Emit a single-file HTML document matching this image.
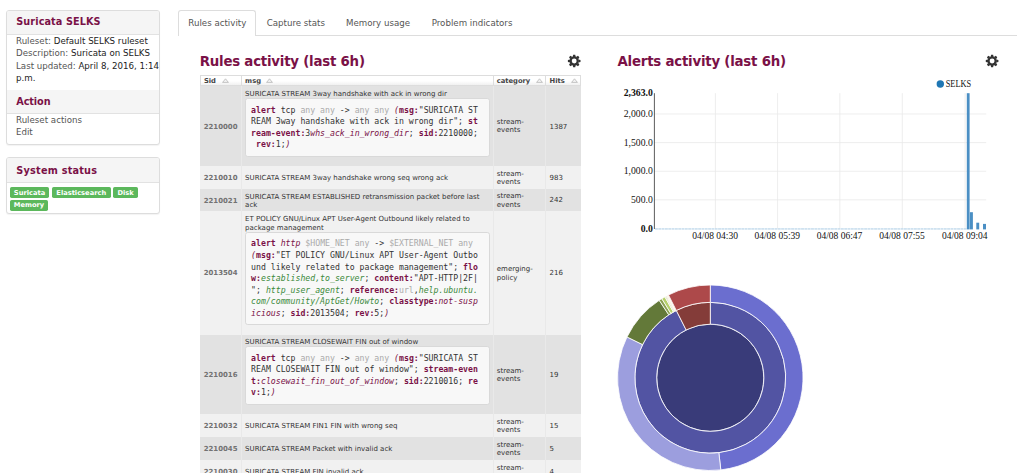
<!DOCTYPE html>
<html lang="en">
<head>
<meta charset="utf-8">
<title>Suricata SELKS</title>
<style>
*{box-sizing:border-box}
html,body{margin:0;padding:0;background:#fff}
body{width:1024px;height:473px;overflow:hidden;position:relative;font-family:"DejaVu Sans","Liberation Sans",sans-serif;font-size:8.67px;color:#333}
.panel{position:absolute;left:6px;width:154px;background:#fff;border:1px solid #ddd;border-radius:3px;box-shadow:0 1px 1px rgba(0,0,0,.05);overflow:hidden}
.ph{position:absolute;left:0;right:0;background:#f5f5f5;height:23px;padding:0 9.3px;line-height:22.4px;font-weight:bold;font-size:9.7px;color:#7a1147;border-bottom:1px solid #e2e2e2;white-space:nowrap}
.pb{position:absolute;left:9px;font-size:8.67px;line-height:12.4px;color:#555;white-space:nowrap}
.pb b{font-weight:normal;color:#222}
#p1{top:10px;height:135px}
#p2{top:157px;height:57px}
.lab{position:absolute;background:#5cb85c;color:#fff;font-weight:bold;font-size:6.7px;line-height:10px;height:11px;padding:0;text-align:center;border-radius:1.7px;white-space:nowrap}
.labs{position:absolute;left:3.2px;font-size:8.67px;white-space:pre;line-height:10px;height:11px}
.tabs{position:absolute;left:178px;top:35px;width:839px;height:1px;background:#ddd}
.tab{position:absolute;top:10px;height:26px;line-height:26.6px;font-size:8.67px;color:#555;white-space:nowrap}
.tab.act{left:178px;width:78px;border:1px solid #ddd;border-bottom:0;border-radius:3px 3px 0 0;background:#fff;height:26px;padding-left:9.3px;line-height:25.6px}
h2{position:absolute;margin:0;letter-spacing:-.22px;font-size:13.35px;line-height:18px;font-weight:bold;color:#7a1147;white-space:nowrap}
#tb{position:absolute;left:0;top:0;width:1024px;height:473px;font-size:7px;line-height:8.15px}
#tb .r{position:absolute;left:200px;width:380.6px}
#tb .o{background:#e2e2e2}
#tb .e{background:#f1f1f1}
#tb .vd{position:absolute;top:86px;height:390px;width:1px;background:#e9e9e9}
#tb .hd{position:absolute;left:199.6px;top:75px;width:381.40000000000003px;height:11px;border:1px solid #ddd;background:linear-gradient(#fff 55%,#f1f1f1)}
#tb .hvd{position:absolute;top:75px;height:11px;width:1px;background:#ddd}
#tb .t,#tb .th,#tb .sid{position:absolute;white-space:nowrap;color:#333}
#tb .th{font-weight:bold;font-size:6.75px;color:#444}
#tb .sid{font-weight:bold;color:#727272;font-size:6.95px}
.tri{position:absolute}
pre{position:absolute;margin:0;padding:0 0 0 5.1px;background:#f8f8f8;border:1px solid #d9d9d9;border-radius:2.7px;font-family:"DejaVu Sans Mono","Liberation Mono",monospace;font-size:8.2px;line-height:11.6px;white-space:pre;color:#333;overflow:hidden}
pre b{color:#7a1147}
pre i.g{color:#aaa;font-style:normal}
pre i.m{color:#7a1147}
pre i.v{color:#3c8a3c}
</style>
</head>
<body>

<div class="panel" id="p1">
  <div class="ph" style="top:0;height:24px;line-height:22.4px;letter-spacing:.09px">Suricata SELKS</div>
  <div class="pb" style="top:23.7px">Ruleset: <b>Default SELKS ruleset</b><br>Description: <b>Suricata on SELKS</b><br>Last updated: <b>April 8, 2016, 1:14<br>p.m.</b></div>
  <div class="ph" style="top:79px;height:24px;line-height:23.4px;letter-spacing:-.1px">Action</div>
  <div class="pb" style="top:102.5px">Ruleset actions<br>Edit</div>
</div>

<div class="panel" id="p2">
  <div class="ph" style="top:0;height:25px;line-height:26.2px;letter-spacing:.23px">System status</div>
  <span class="lab" style="left:3px;top:29px;width:39px;padding-top:1px">Suricata</span><span class="lab" style="left:45px;top:29px;width:58.5px;padding-top:1px">Elasticsearch</span><span class="lab" style="left:106.3px;top:29px;width:24.6px;padding-top:1px">Disk</span>
  <span class="lab" style="left:3px;top:42px;width:38px">Memory</span>
</div>

<div class="tabs"></div>
<div class="tab act">Rules activity</div>
<div class="tab" style="left:266.7px">Capture stats</div>
<div class="tab" style="left:346px">Memory usage</div>
<div class="tab" style="left:431.7px">Problem indicators</div>

<h2 style="left:199.7px;top:52.6px">Rules activity (last 6h)</h2>
<h2 style="left:617.5px;top:52.6px">Alerts activity (last 6h)</h2>
<svg style="position:absolute;left:0;top:40px" width="1024" height="40" viewBox="0 40 1024 40"><g fill="#333"><circle cx="574.2" cy="61.0" r="4.55"/><path transform="rotate(0.0 574.2 61.0)" d="M572.65 56.95L573.20 54.70L575.20 54.70L575.75 56.95Z"/><path transform="rotate(45.0 574.2 61.0)" d="M572.65 56.95L573.20 54.70L575.20 54.70L575.75 56.95Z"/><path transform="rotate(90.0 574.2 61.0)" d="M572.65 56.95L573.20 54.70L575.20 54.70L575.75 56.95Z"/><path transform="rotate(135.0 574.2 61.0)" d="M572.65 56.95L573.20 54.70L575.20 54.70L575.75 56.95Z"/><path transform="rotate(180.0 574.2 61.0)" d="M572.65 56.95L573.20 54.70L575.20 54.70L575.75 56.95Z"/><path transform="rotate(225.0 574.2 61.0)" d="M572.65 56.95L573.20 54.70L575.20 54.70L575.75 56.95Z"/><path transform="rotate(270.0 574.2 61.0)" d="M572.65 56.95L573.20 54.70L575.20 54.70L575.75 56.95Z"/><path transform="rotate(315.0 574.2 61.0)" d="M572.65 56.95L573.20 54.70L575.20 54.70L575.75 56.95Z"/></g><circle cx="574.2" cy="61.0" r="2.45" fill="#fff"/><g fill="#333"><circle cx="992.1" cy="61.0" r="4.55"/><path transform="rotate(0.0 992.1 61.0)" d="M990.55 56.95L991.10 54.70L993.10 54.70L993.65 56.95Z"/><path transform="rotate(45.0 992.1 61.0)" d="M990.55 56.95L991.10 54.70L993.10 54.70L993.65 56.95Z"/><path transform="rotate(90.0 992.1 61.0)" d="M990.55 56.95L991.10 54.70L993.10 54.70L993.65 56.95Z"/><path transform="rotate(135.0 992.1 61.0)" d="M990.55 56.95L991.10 54.70L993.10 54.70L993.65 56.95Z"/><path transform="rotate(180.0 992.1 61.0)" d="M990.55 56.95L991.10 54.70L993.10 54.70L993.65 56.95Z"/><path transform="rotate(225.0 992.1 61.0)" d="M990.55 56.95L991.10 54.70L993.10 54.70L993.65 56.95Z"/><path transform="rotate(270.0 992.1 61.0)" d="M990.55 56.95L991.10 54.70L993.10 54.70L993.65 56.95Z"/><path transform="rotate(315.0 992.1 61.0)" d="M990.55 56.95L991.10 54.70L993.10 54.70L993.65 56.95Z"/></g><circle cx="992.1" cy="61.0" r="2.45" fill="#fff"/></svg>

<div id="tb">
<div class="r o" style="top:86px;height:79.70px"></div>
<div class="r e" style="top:165.7px;height:23.30px"></div>
<div class="r o" style="top:189px;height:22.00px"></div>
<div class="r e" style="top:211px;height:124.00px"></div>
<div class="r o" style="top:335px;height:79.20px"></div>
<div class="r e" style="top:414.2px;height:23.20px"></div>
<div class="r o" style="top:437.4px;height:22.30px"></div>
<div class="r e" style="top:459.7px;height:23.30px"></div>
<div class="vd" style="left:241.0px"></div>
<div class="vd" style="left:493.1px"></div>
<div class="vd" style="left:544.8px"></div>
<div class="hd"></div>
<div class="hvd" style="left:241.0px"></div>
<div class="hvd" style="left:493.1px"></div>
<div class="hvd" style="left:544.8px"></div>
<div class="th" style="left:203.9px;top:76.85px">Sid</div>
<svg class="tri" style="left:221.6px;top:78.3px" width="7" height="5" viewBox="0 0 7 5"><path d="M0.6 4.4L3.5 0.8L6.4 4.4Z" fill="#f4f4f4" stroke="#b8b8b8" stroke-width="0.8"/></svg>
<div class="th" style="left:245.1px;top:76.85px">msg</div>
<svg class="tri" style="left:266.3px;top:78.3px" width="7" height="5" viewBox="0 0 7 5"><path d="M0.6 4.4L3.5 0.8L6.4 4.4Z" fill="#f4f4f4" stroke="#b8b8b8" stroke-width="0.8"/></svg>
<div class="th" style="left:496.7px;top:76.85px">category</div>
<svg class="tri" style="left:535.7px;top:78.3px" width="7" height="5" viewBox="0 0 7 5"><path d="M0.6 4.4L3.5 0.8L6.4 4.4Z" fill="#f4f4f4" stroke="#b8b8b8" stroke-width="0.8"/></svg>
<div class="th" style="left:549.6px;top:76.85px">Hits</div>
<svg class="tri" style="left:570.6px;top:78.3px" width="7" height="5" viewBox="0 0 7 5"><path d="M0.6 4.4L3.5 0.8L6.4 4.4Z" fill="#f4f4f4" stroke="#b8b8b8" stroke-width="0.8"/></svg>
<div class="sid" style="left:203.7px;top:122.60px">2210000</div>
<div class="t" style="left:245.1px;top:89.90px">SURICATA STREAM 3way handshake with ack in wrong dir</div>
<pre style="left:245px;top:98px;width:244.5px;height:59.00px;padding-top:5.70px"><b>alert</b> tcp <i class="g">any any</i> -&gt; <i class="g">any any</i> <i class="m">(</i><b>msg:</b>"SURICATA ST
REAM 3way handshake with ack in wrong dir"; <b>st
ream-event:</b>3<i class="m">whs_ack_in_wrong_dir</i>; <b>sid:</b>2210000;
 <b>rev:</b>1;<i class="m">)</i></pre>
<div class="t" style="left:496.8px;top:118.20px">stream-<br>events</div>
<div class="t" style="left:549.5px;top:122.60px">1387</div>
<div class="sid" style="left:203.7px;top:173.50px">2210010</div>
<div class="t" style="left:245.1px;top:173.50px">SURICATA STREAM 3way handshake wrong seq wrong ack</div>
<div class="t" style="left:496.8px;top:169.70px">stream-<br>events</div>
<div class="t" style="left:549.5px;top:173.50px">983</div>
<div class="sid" style="left:203.7px;top:196.75px">2210021</div>
<div class="t" style="left:245.1px;top:192.55px">SURICATA STREAM ESTABLISHED retransmission packet before last<br>ack</div>
<div class="t" style="left:496.8px;top:192.35px">stream-<br>events</div>
<div class="t" style="left:549.5px;top:196.15px">242</div>
<div class="sid" style="left:203.7px;top:269.15px">2013504</div>
<div class="t" style="left:245.1px;top:215.35px">ET POLICY GNU/Linux APT User-Agent Outbound likely related to<br>package management</div>
<pre style="left:245px;top:232px;width:244.5px;height:93.00px;padding-top:5.40px"><b>alert</b> <i class="m">http</i> <i class="g">$HOME_NET any</i> -&gt; <i class="g">$EXTERNAL_NET any</i>
<i class="m">(</i><b>msg:</b>"ET POLICY GNU/Linux APT User-Agent Outbo
und likely related to package management"; <b>flo
w:</b><i class="v">established,to_server</i>; <b>content:</b>"APT-HTTP|2F|
"; <i class="v">http_user_agent</i>; <b>reference:</b><i class="g">url</i>,<i class="v">help.ubuntu.
com/community/AptGet/Howto</i>; <b>classtype:</b><i class="m">not-susp
icious</i>; <b>sid:</b>2013504; <b>rev:</b>5;<i class="m">)</i></pre>
<div class="t" style="left:496.8px;top:265.35px">emerging-<br>policy</div>
<div class="t" style="left:549.5px;top:269.15px">216</div>
<div class="sid" style="left:203.7px;top:370.75px">2210016</div>
<div class="t" style="left:245.1px;top:337.85px">SURICATA STREAM CLOSEWAIT FIN out of window</div>
<pre style="left:245px;top:346px;width:244.5px;height:59.00px;padding-top:5.70px"><b>alert</b> tcp <i class="g">any any</i> -&gt; <i class="g">any any</i> <i class="m">(</i><b>msg:</b>"SURICATA ST
REAM CLOSEWAIT FIN out of window"; <b>stream-even
t:</b><i class="m">closewait_fin_out_of_window</i>; <b>sid:</b>2210016; <b>re
v:</b>1;<i class="m">)</i></pre>
<div class="t" style="left:496.8px;top:366.95px">stream-<br>events</div>
<div class="t" style="left:549.5px;top:370.75px">19</div>
<div class="sid" style="left:203.7px;top:421.95px">2210032</div>
<div class="t" style="left:245.1px;top:421.95px">SURICATA STREAM FIN1 FIN with wrong seq</div>
<div class="t" style="left:496.8px;top:418.15px">stream-<br>events</div>
<div class="t" style="left:549.5px;top:421.95px">15</div>
<div class="sid" style="left:203.7px;top:444.70px">2210045</div>
<div class="t" style="left:245.1px;top:444.70px">SURICATA STREAM Packet with invalid ack</div>
<div class="t" style="left:496.8px;top:440.90px">stream-<br>events</div>
<div class="t" style="left:549.5px;top:444.70px">5</div>
<div class="sid" style="left:203.7px;top:467.50px">2210030</div>
<div class="t" style="left:245.1px;top:467.50px">SURICATA STREAM FIN invalid ack</div>
<div class="t" style="left:496.8px;top:463.70px">stream-<br>events</div>
<div class="t" style="left:549.5px;top:467.50px">4</div>
</div>

<svg style="position:absolute;left:600px;top:70px" width="424" height="180" viewBox="600 70 424 180" font-family="'Liberation Serif','DejaVu Serif',serif"><g stroke="#e9e9e9" stroke-width="0.8"><line x1="715.4" y1="93.2" x2="715.4" y2="228.5"/><line x1="777.6" y1="93.2" x2="777.6" y2="228.5"/><line x1="839.8" y1="93.2" x2="839.8" y2="228.5"/><line x1="902.3" y1="93.2" x2="902.3" y2="228.5"/><line x1="965.1" y1="93.2" x2="965.1" y2="228.5"/><line x1="654.5" y1="113.98" x2="986.2" y2="113.98"/><line x1="654.5" y1="142.61" x2="986.2" y2="142.61"/><line x1="654.5" y1="171.24" x2="986.2" y2="171.24"/><line x1="654.5" y1="199.87" x2="986.2" y2="199.87"/></g><line x1="654.4" y1="93.2" x2="654.4" y2="229.0" stroke="#333" stroke-width="0.8"/><line x1="655" y1="228.95" x2="966.5" y2="228.95" stroke="#a9cbe4" stroke-width="1" stroke-dasharray="2.9 0.42"/><g text-anchor="end" fill="#111" font-size="9.7"><text x="652.8" y="96.10" font-weight="bold">2,363.0</text><text x="652.8" y="116.88">2,000.0</text><text x="652.8" y="145.51">1,500.0</text><text x="652.8" y="174.14">1,000.0</text><text x="652.8" y="202.77">500.0</text><text x="652.8" y="231.90" font-weight="bold">0.0</text></g><g text-anchor="middle" fill="#111" font-size="9.5"><text x="715.1" y="239.3">04/08 04:30</text><text x="777.3000000000001" y="239.3">04/08 05:39</text><text x="839.5" y="239.3">04/08 06:47</text><text x="902.0" y="239.3">04/08 07:55</text><text x="964.8000000000001" y="239.3">04/08 09:04</text></g><g fill="#4b8fc4"><rect x="966.8" y="93.2" width="2.80" height="136.20"/><rect x="969.9" y="212.2" width="3.00" height="17.20"/><rect x="976.3" y="222.7" width="2.90" height="6.70"/><rect x="983.0" y="223.9" width="3.00" height="5.50"/></g><circle cx="940.3" cy="84" r="3.7" fill="#1f77b4"/><text x="945.7" y="86.6" fill="#111" font-size="9.4" textLength="25.4" lengthAdjust="spacingAndGlyphs">SELKS</text></svg>

<svg style="position:absolute;left:600px;top:270px" width="260" height="203" viewBox="600 270 260 203"><g stroke="#fff" stroke-width="0.8" stroke-linejoin="round"><circle cx="710.3" cy="377.75" r="53.6" fill="#393b79"/><path d="M710.30 302.35A75.4 75.4 0 1 1 676.30 310.45L686.13 329.91A53.6 53.6 0 1 0 710.30 324.15Z" fill="#5254a3"/><path d="M676.30 310.45A75.4 75.4 0 0 1 710.30 302.35L710.30 324.15A53.6 53.6 0 0 0 686.13 329.91Z" fill="#843c39"/><path d="M710.30 285.00A92.75 92.75 0 0 1 720.80 469.90L718.84 452.67A75.4 75.4 0 0 0 710.30 302.35Z" fill="#6b6ecf"/><path d="M720.80 469.90A92.75 92.75 0 0 1 627.01 336.95L642.59 344.58A75.4 75.4 0 0 0 718.84 452.67Z" fill="#9c9ede"/><path d="M627.01 336.95A92.75 92.75 0 0 1 659.24 300.32L668.79 314.80A75.4 75.4 0 0 0 642.59 344.58Z" fill="#637939"/><path d="M659.24 300.32A92.75 92.75 0 0 1 661.84 298.67L670.90 313.46A75.4 75.4 0 0 0 668.79 314.80Z" fill="#8ca252"/><path d="M661.84 298.67A92.75 92.75 0 0 1 664.91 296.87L673.40 312.00A75.4 75.4 0 0 0 670.90 313.46Z" fill="#b5cf6b"/><path d="M664.91 296.87A92.75 92.75 0 0 1 666.04 296.24L674.32 311.49A75.4 75.4 0 0 0 673.40 312.00Z" fill="#cedb9c"/><path d="M666.04 296.24A92.75 92.75 0 0 1 666.61 295.93L674.79 311.24A75.4 75.4 0 0 0 674.32 311.49Z" fill="#8c6d31"/><path d="M666.61 295.93A92.75 92.75 0 0 1 667.19 295.63L675.25 310.99A75.4 75.4 0 0 0 674.79 311.24Z" fill="#bd9e39"/><path d="M667.19 295.63A92.75 92.75 0 0 1 667.76 295.33L675.72 310.75A75.4 75.4 0 0 0 675.25 310.99Z" fill="#e7ba52"/><path d="M667.76 295.33A92.75 92.75 0 0 1 668.48 294.96L676.30 310.45A75.4 75.4 0 0 0 675.72 310.75Z" fill="#e7cb94"/><path d="M668.48 294.96A92.75 92.75 0 0 1 710.30 285.00L710.30 302.35A75.4 75.4 0 0 0 676.30 310.45Z" fill="#ad494a"/></g></svg>

</body>
</html>
